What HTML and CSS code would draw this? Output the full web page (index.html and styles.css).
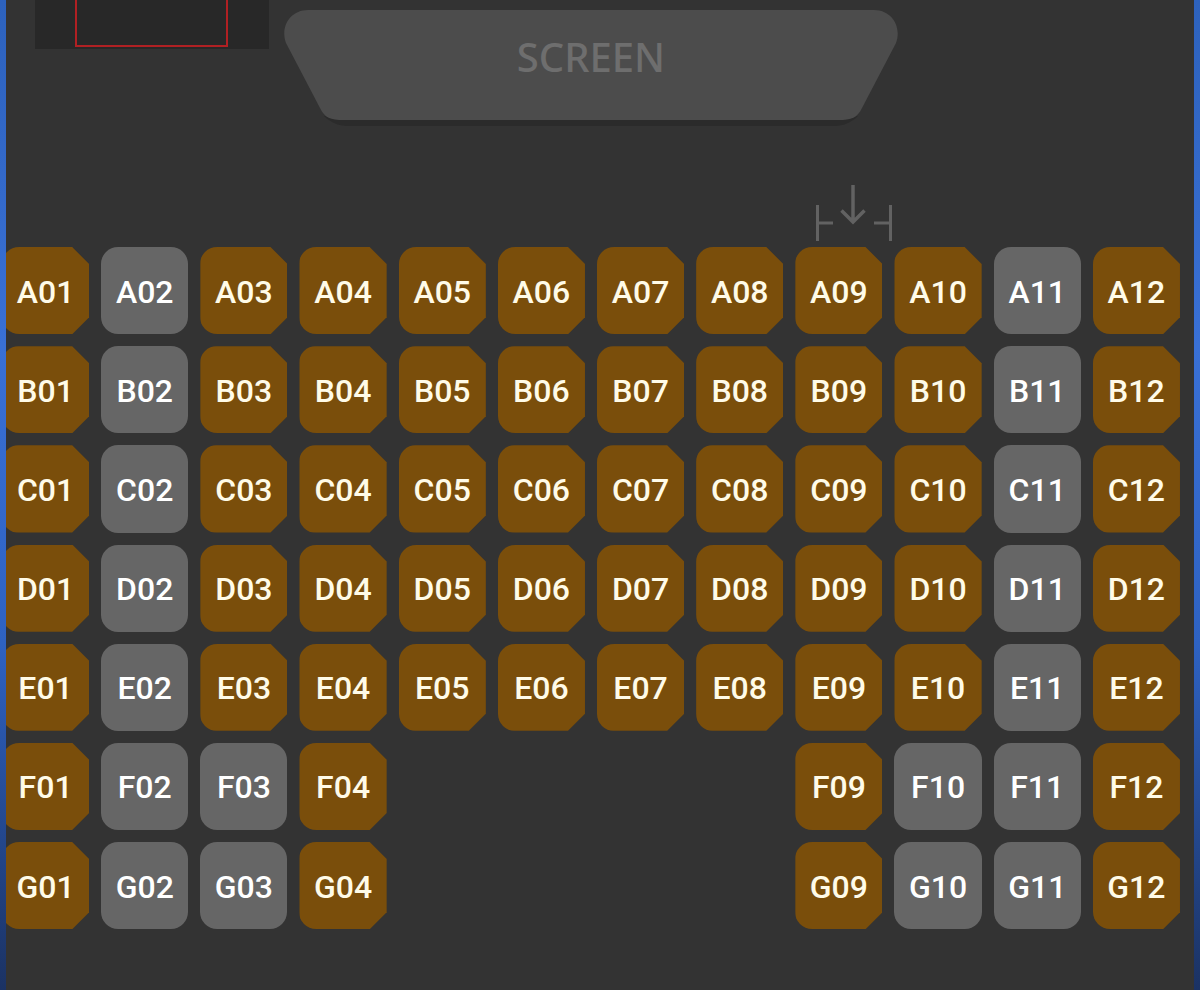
FILE: index.html
```html
<!DOCTYPE html>
<html lang="en">
<head>
<meta charset="utf-8">
<meta name="viewport" content="width=device-width, initial-scale=1">
<title>Seat selection</title>
<link rel="stylesheet" href="styles.css">
</head>
<body>
<main class="hall">
  <header class="top">
    <div class="minimap"><div class="viewport"></div></div>
    <div class="screen">
      <svg class="screen-shape" viewBox="0 0 614 117" preserveAspectRatio="none" aria-hidden="true">
        <path fill="#2b2b2b" d="M40 106 C46 112 54 116 64 116 H550 C560 116 568 112 574 106 Z"/>
        <path fill="#4c4c4c" d="M24 0 H590 C608 0 618 17 612 33 L578 98 C573 108 568 110 554 110 H60 C46 110 41 108 36 98 L2 33 C-4 17 6 0 24 0 Z"/>
      </svg>
      <h1 class="screen-label">SCREEN</h1>
    </div>
  </header>
  <div class="columns entry-row">
    <svg class="entry" viewBox="0 0 78 56" role="img" aria-label="Entrance" fill="none" stroke="#626262" stroke-width="3">
      <path d="M2.500 20V56M2.500 38H18M75.500 20V56M75.500 38H59"/>
      <path stroke-width="3.500" d="M38 0V36M26.500 25.500L38 37L49.500 25.500"/>
    </svg>
  </div>
  <div class="columns seats">
    <button class="seat sold">A01</button><button class="seat">A02</button><button class="seat sold">A03</button><button class="seat sold">A04</button><button class="seat sold">A05</button><button class="seat sold">A06</button><button class="seat sold">A07</button><button class="seat sold">A08</button><button class="seat sold">A09</button><button class="seat sold">A10</button><button class="seat">A11</button><button class="seat sold">A12</button>
    <button class="seat sold">B01</button><button class="seat">B02</button><button class="seat sold">B03</button><button class="seat sold">B04</button><button class="seat sold">B05</button><button class="seat sold">B06</button><button class="seat sold">B07</button><button class="seat sold">B08</button><button class="seat sold">B09</button><button class="seat sold">B10</button><button class="seat">B11</button><button class="seat sold">B12</button>
    <button class="seat sold">C01</button><button class="seat">C02</button><button class="seat sold">C03</button><button class="seat sold">C04</button><button class="seat sold">C05</button><button class="seat sold">C06</button><button class="seat sold">C07</button><button class="seat sold">C08</button><button class="seat sold">C09</button><button class="seat sold">C10</button><button class="seat">C11</button><button class="seat sold">C12</button>
    <button class="seat sold">D01</button><button class="seat">D02</button><button class="seat sold">D03</button><button class="seat sold">D04</button><button class="seat sold">D05</button><button class="seat sold">D06</button><button class="seat sold">D07</button><button class="seat sold">D08</button><button class="seat sold">D09</button><button class="seat sold">D10</button><button class="seat">D11</button><button class="seat sold">D12</button>
    <button class="seat sold">E01</button><button class="seat">E02</button><button class="seat sold">E03</button><button class="seat sold">E04</button><button class="seat sold">E05</button><button class="seat sold">E06</button><button class="seat sold">E07</button><button class="seat sold">E08</button><button class="seat sold">E09</button><button class="seat sold">E10</button><button class="seat">E11</button><button class="seat sold">E12</button>
    <button class="seat sold">F01</button><button class="seat">F02</button><button class="seat">F03</button><button class="seat sold">F04</button><button class="seat sold ninth">F09</button><button class="seat">F10</button><button class="seat">F11</button><button class="seat sold">F12</button>
    <button class="seat sold">G01</button><button class="seat">G02</button><button class="seat">G03</button><button class="seat sold">G04</button><button class="seat sold ninth">G09</button><button class="seat">G10</button><button class="seat">G11</button><button class="seat sold">G12</button>
  </div>
</main>
</body>
</html>
```
FILE: styles.css
```css
* { box-sizing: border-box; }

body {
  margin: 0;
  min-height: 100vh;
  padding: 0 6px;
  background: linear-gradient(#2d62bd 0%, #3970d6 35%, #2e62c2 65%, #1b3263 100%);
  font-family: Roboto, "Liberation Sans", sans-serif;
}

.hall {
  min-height: 100vh;
  padding-bottom: 60px;
  background: #333;
  overflow: hidden;
}

.top {
  display: grid;
  grid-template-columns: 29fr 234fr 15fr 614fr 296fr;
  align-items: start;
}

.minimap {
  grid-column: 2;
  height: 49px;
  padding: 0 17.500% 2px 17%;
  background: #282828;
}

.viewport {
  height: 47px;
  border: 2px solid #b12023;
  border-top: 0;
}

.screen {
  grid-column: 4;
  display: grid;
  margin-top: 10px;
}

.screen-shape {
  grid-area: 1 / 1;
  width: 100%;
  height: 117px;
}

.screen-label {
  grid-area: 1 / 1;
  margin: 0;
  padding-top: 20px;
  color: #6e6e6e;
  font: 500 40px/54px "Noto Sans", sans-serif;
  text-align: center;
}

.columns {
  display: grid;
  grid-template-columns: repeat(12, minmax(0, 1fr));
  gap: 12px;
  margin: 0 14px 0 -4px;
}

.entry-row { padding: 58px 0 6px; }

.entry {
  grid-column: 9;
  width: 78px;
  height: 56px;
  margin-left: 20px;
}

.seat {
  aspect-ratio: 1;
  padding: 2px 0 0;
  border: 0;
  border-radius: 17px;
  background: #666;
  color: #fff;
  font: 500 32px/40px Roboto, "Liberation Sans", sans-serif;
}

.seat.sold {
  border-radius: 17px 0 0 17px;
  background: #7a4e0b;
  color: #fffbe8;
  clip-path: polygon(0 0, calc(100% - 17px) 0, 100% 17px, 100% calc(100% - 17px), calc(100% - 17px) 100%, 0 100%);
}

.ninth { grid-column-start: 9; }
```
